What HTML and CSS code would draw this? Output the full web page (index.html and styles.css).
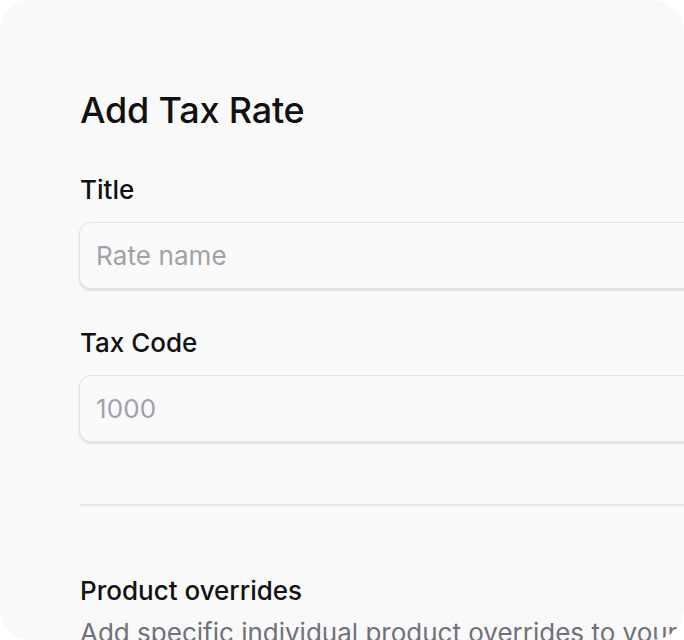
FILE: index.html
```html
<!DOCTYPE html>
<html>
<head>
<meta charset="utf-8">
<link rel="stylesheet" href="styles.css">
</head>
<body>
<div class="card">
  <h1 class="title">Add Tax Rate</h1>
  <div class="field">
    <label class="label">Title</label>
    <div class="input"><span class="ph">Rate name</span></div>
  </div>
  <div class="field">
    <label class="label">Tax Code</label>
    <div class="input"><span class="ph">1000</span></div>
  </div>
  <hr class="divider">
  <div class="section">
    <div class="section-title">Product overrides</div>
    <div class="section-desc">Add specific individual product overrides to your tax rate</div>
  </div>
</div>
</body>
</html>
```
FILE: styles.css
```css
html, body {
  margin: 0;
  padding: 0;
  background: #ffffff;
  overflow: hidden;
}
body {
  width: 684px;
  height: 640px;
  font-family: "Inter", "Liberation Sans", sans-serif;
  color: #111113;
}
.card {
  width: 684px;
  height: 640px;
  background: #f9f9f9;
  border-radius: 32px;
  box-sizing: border-box;
  padding: 86px 0 0 80px;
  display: flex;
  flex-direction: column;
  overflow: hidden;
}
.title {
  margin: 0;
  font-size: 36px;
  font-weight: 500;
  line-height: 48px;
  letter-spacing: -0.2px;
}
.field {
  display: flex;
  flex-direction: column;
  margin-top: 38px;
  margin-right: -40px;
}
.field + .field { margin-top: 36px; }
.label {
  font-size: 26px;
  font-weight: 500;
  line-height: 36px;
  margin-bottom: 14px;
}
.input {
  height: 67px;
  box-sizing: border-box;
  border: 1.5px solid #e2e2e5;
  border-radius: 12px;
  background: #fafafa;
  box-shadow: 0 2px 2px rgba(0,0,0,0.10);
  display: flex;
  align-items: center;
  padding-left: 16px;
  margin-left: -1px;
}
.ph {
  font-size: 26px;
  color: #a1a1aa;
  letter-spacing: 0.1px;
}
.divider {
  border: none;
  border-top: 2px solid #e6e6e8;
  margin: 62px 0 0 0;
  width: 100%;
}
.section {
  margin-top: 67px;
}
.section-title {
  font-size: 26px;
  font-weight: 500;
  line-height: 36px;
}
.section-desc {
  font-size: 26px;
  color: #71717a;
  line-height: 36px;
  margin-top: 6px;
}
```
